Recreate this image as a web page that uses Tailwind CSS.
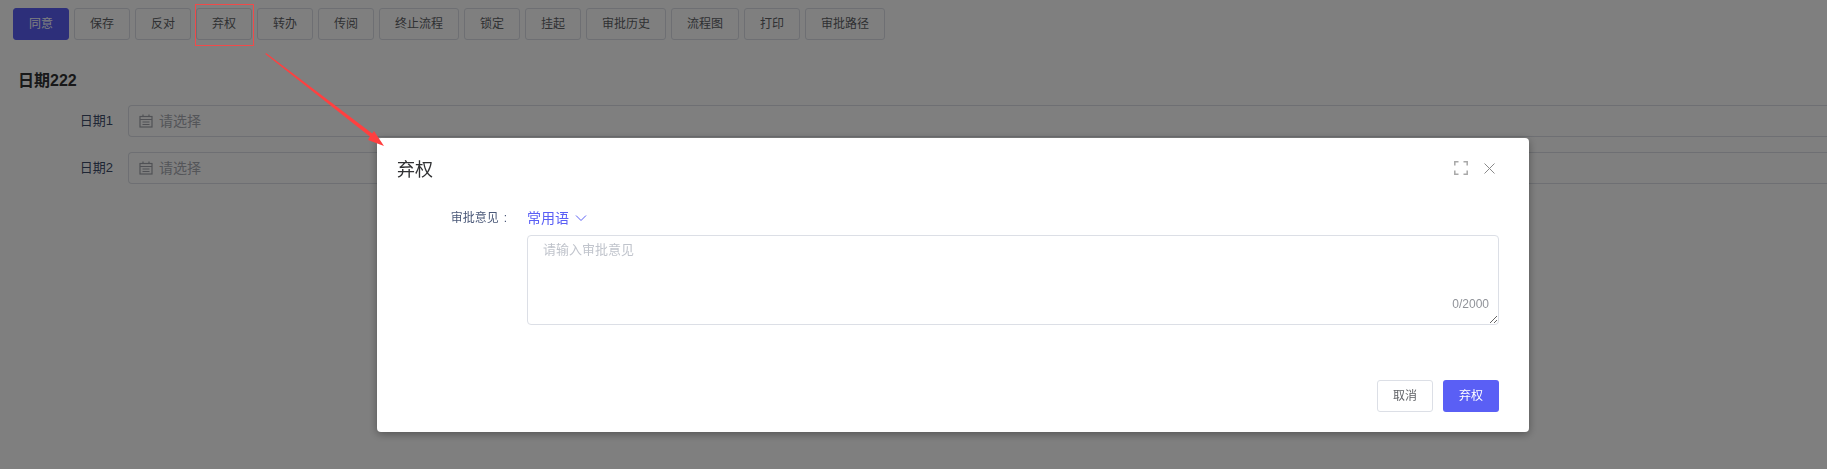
<!DOCTYPE html>
<html lang="en">
<head>
  <meta charset="UTF-8" />
  <title>弃权</title>
  <script src="https://cdn.jsdelivr.net/npm/@tailwindcss/browser@4"></script>
</head>
<body class="bg-white overflow-hidden h-[469px] font-['Liberation_Sans','Noto_Sans_CJK_SC',sans-serif] text-[#606266]">
  <!-- page behind the dialog -->
  <div class="flex gap-[5px] pl-[13px] pt-[8px] text-[12px]">
    <button class="h-[32px] w-[56px] rounded-[3px] border border-[#5a5ff5] bg-[#5a5ff5] text-white">同意</button>
    <button class="h-[32px] w-[56px] rounded-[3px] border border-[#dcdfe6]">保存</button>
    <button class="h-[32px] w-[56px] rounded-[3px] border border-[#dcdfe6]">反对</button>
    <button class="h-[32px] w-[56px] rounded-[3px] border border-[#dcdfe6]">弃权</button>
    <button class="h-[32px] w-[56px] rounded-[3px] border border-[#dcdfe6]">转办</button>
    <button class="h-[32px] w-[56px] rounded-[3px] border border-[#dcdfe6]">传阅</button>
    <button class="h-[32px] w-[80px] rounded-[3px] border border-[#dcdfe6]">终止流程</button>
    <button class="h-[32px] w-[56px] rounded-[3px] border border-[#dcdfe6]">锁定</button>
    <button class="h-[32px] w-[56px] rounded-[3px] border border-[#dcdfe6]">挂起</button>
    <button class="h-[32px] w-[80px] rounded-[3px] border border-[#dcdfe6]">审批历史</button>
    <button class="h-[32px] w-[68px] rounded-[3px] border border-[#dcdfe6]">流程图</button>
    <button class="h-[32px] w-[56px] rounded-[3px] border border-[#dcdfe6]">打印</button>
    <button class="h-[32px] w-[80px] rounded-[3px] border border-[#dcdfe6]">审批路径</button>
  </div>
  <div class="pl-[18px] pt-[30px]">
    <h3 class="text-[16px] leading-[22px] font-bold text-[#303133]">日期222</h3>
    <div class="mt-[13px] flex flex-col gap-[15px]">
      <div class="flex items-center">
        <label class="w-[95px] shrink-0 text-right text-[13px] text-[#3f4d6b]">日期1</label>
        <div class="ml-[15px] flex h-[32px] flex-1 items-center gap-[6px] rounded-l-[4px] border border-r-0 border-[#dcdfe6] pl-[10px] text-[14px] text-[#a8abb2]">
          <svg width="14" height="14" viewBox="0 0 14 14" fill="none" stroke="#a0a3aa" stroke-width="1.200"><rect x="1" y="2.500" width="12" height="10.500"/><path d="M1 5.500h12M4 .5v2.500M10 .5v2.500M3.500 8h7M3.500 10.500h7"/></svg>
          <span>请选择</span>
        </div>
      </div>
      <div class="flex items-center">
        <label class="w-[95px] shrink-0 text-right text-[13px] text-[#3f4d6b]">日期2</label>
        <div class="ml-[15px] flex h-[32px] flex-1 items-center gap-[6px] rounded-l-[4px] border border-r-0 border-[#dcdfe6] pl-[10px] text-[14px] text-[#a8abb2]">
          <svg width="14" height="14" viewBox="0 0 14 14" fill="none" stroke="#a0a3aa" stroke-width="1.200"><rect x="1" y="2.500" width="12" height="10.500"/><path d="M1 5.500h12M4 .5v2.500M10 .5v2.500M3.500 8h7M3.500 10.500h7"/></svg>
          <span>请选择</span>
        </div>
      </div>
    </div>
  </div>

  <!-- mask and dialog -->
  <div class="fixed inset-0 bg-black/50 pl-[377px] pt-[138px]">
    <div class="flex h-[294px] w-[1152px] flex-col rounded-[4px] bg-white shadow-[0_2px_8px_rgba(0,0,0,0.35)]">
      <div class="flex items-center justify-between pl-[20px] pr-[34px] pt-[20px]">
        <span class="text-[18px] leading-[24px] text-[#303133]">弃权</span>
        <div class="mb-[4px] flex items-center gap-[16px]">
          <svg width="14" height="14" viewBox="0 0 14 14" fill="none" stroke="#a8a8a8" stroke-width="1.500"><path d="M.8 4.500V.8h3.700M9.500 .8h3.700v3.700M13.200 9.500v3.700H9.500M4.500 13.200H.8V9.500"/></svg>
          <svg width="11" height="11" viewBox="0 0 11 11" fill="none" stroke="#8a8a8a"><path d="M.5 .5l10 10M10.500 .5l-10 10"/></svg>
        </div>
      </div>
      <div class="flex pt-[26px] pr-[30px]">
        <label class="flex h-[20px] w-[132px] items-center justify-end pr-[2px] text-[12px] text-[#4a5878]">审批意见<span class="ml-[5px]">:</span></label>
        <div class="ml-[18px] flex-1">
          <div class="flex h-[20px] items-center gap-[6px] text-[14px] text-[#5a5ff5]">
            <span>常用语</span>
            <svg width="12" height="8" viewBox="0 0 12 8" fill="none" stroke="#5a5ff5"><path d="M1 1.500l5 5 5-5"/></svg>
          </div>
          <div class="relative mt-[7px] h-[90px] rounded-[4px] border border-[#dcdfe6]">
            <textarea placeholder="请输入审批意见" class="block h-full w-full resize-y px-[15px] py-[4px] text-[13px] leading-[20px] outline-none placeholder:text-[#c0c4cc]"></textarea>
            <span class="absolute right-[9px] bottom-[14px] text-[12px] leading-none text-[#909399]">0/2000</span>
          </div>
        </div>
      </div>
      <div class="mt-auto flex justify-end gap-[10px] pr-[30px] pb-[20px] text-[12px]">
        <button class="h-[32px] w-[56px] rounded-[3px] border border-[#dcdfe6] text-[#606266]">取消</button>
        <button class="h-[32px] w-[56px] rounded-[3px] bg-[#5a5ff5] text-white">弃权</button>
      </div>
    </div>
  </div>

  <!-- annotations drawn over the screenshot -->
  <div class="absolute left-[195px] top-[4px] h-[42px] w-[59px] border border-[#f04a4a]"></div>
  <svg class="absolute left-0 top-0" width="500" height="200" viewBox="0 0 500 200"><polygon points="266,53 372.200,133.400 374,131 384,146 368,140 369.800,136.600 265.400,54" fill="#ff4040"/></svg>
</body>
</html>
